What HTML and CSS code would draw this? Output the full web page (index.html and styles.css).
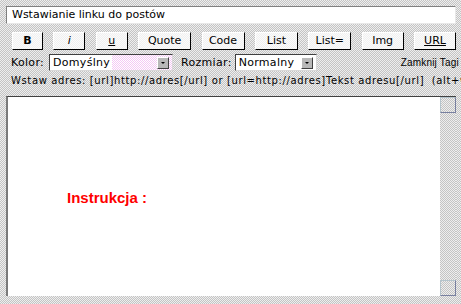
FILE: index.html
```html
<!DOCTYPE html>
<html lang="pl">
<head>
  <meta charset="UTF-8" />
  <title>Wstawianie linku do postów</title>
  <link rel="stylesheet" href="styles.css">
</head>
<body>
  <div class="editor">
    <div class="subject">Wstawianie linku do postów</div>

    <div class="toolbar">
      <div class="btn btn-b">B</div>
      <div class="btn btn-i">i</div>
      <div class="btn btn-u">u</div>
      <div class="btn btn-quote">Quote</div>
      <div class="btn btn-code">Code</div>
      <div class="btn btn-list">List</div>
      <div class="btn btn-list">List=</div>
      <div class="btn btn-img">Img</div>
      <div class="btn btn-url">URL</div>
    </div>

    <div class="options">
      <span class="label">Kolor:</span>
      <div class="select select-color">
        <span class="value">Domyślny</span>
        <span class="arrow"></span>
      </div>
      <span class="label label-size">Rozmiar:</span>
      <div class="select select-size">
        <span class="value">Normalny</span>
        <span class="arrow"></span>
      </div>
      <span class="close-tags">Zamknij Tagi</span>
    </div>

    <div class="help">Wstaw adres: [url]http://adres[/url] or [url=http://adres]Tekst adresu[/url]&nbsp; (alt+w)</div>

    <div class="message">
      <div class="message-text">
        <p class="instruction">Instrukcja :</p>
      </div>
      <div class="scrollbar">
        <div class="scroll-btn"></div>
        <div class="scroll-track"></div>
        <div class="scroll-btn"></div>
      </div>
    </div>
  </div>
</body>
</html>
```

FILE: styles.css
```css
body {
  margin: 0;
  width: 461px;
  height: 304px;
  overflow: hidden;
  background: repeating-conic-gradient(#c4c4c4 0 25%, #eeeeee 0 50%) 0 0 / 2px 2px;
  font-family: "DejaVu Sans", Verdana, sans-serif;
  font-size: 11px;
  color: #000;
}
.editor {
  padding: 6px 5px 0 6px;
}
.subject {
  height: 16px;
  line-height: 16px;
  padding-left: 5px;
  background: #fff;
  border-top: 1px solid #808080;
  border-left: 1px solid #808080;
  border-bottom: 1px solid #e8e8e8;
  border-right: 1px solid #e8e8e8;
  white-space: nowrap;
}
.toolbar {
  display: flex;
  justify-content: space-between;
  margin: 8px 0 0 6px;
}
.btn {
  height: 16px;
  line-height: 16px;
  text-align: center;
  background: repeating-conic-gradient(#f0f0f0 0 25%, #fbfbfb 0 50%) 0 0 / 2px 2px;
  border-top: 1px solid #fff;
  border-left: 1px solid #fff;
  border-right: 1px solid #000;
  border-bottom: 1px solid #000;
}
.btn-b { width: 29px; font-weight: bold; }
.btn-i { width: 30px; font-style: italic; }
.btn-u { width: 30px; text-decoration: underline; }
.btn-quote { width: 51px; }
.btn-code { width: 41px; }
.btn-list { width: 41px; }
.btn-img { width: 40px; }
.btn-url { width: 40px; text-decoration: underline; }
.options {
  display: flex;
  align-items: center;
  height: 19px;
  margin-top: 3px;
  padding-left: 5px;
  white-space: nowrap;
  letter-spacing: 0.3px;
}
.label {
  margin-right: 5px;
}
.label-size {
  margin-left: 8px;
  margin-right: 3px;
}
.select {
  display: flex;
  align-items: center;
  height: 15px;
  border-top: 1px solid #404040;
  border-left: 1px solid #404040;
  border-bottom: 1px solid #d8d8d8;
  border-right: 1px solid #d8d8d8;
  background: #fff;
}
.select .value {
  flex: 1;
  padding-left: 3px;
  line-height: 15px;
}
.select-color {
  width: 122px;
  background: repeating-conic-gradient(#f4c8f4 0 25%, #fff 0 50%) 0 0 / 2px 2px;
}
.select-color .value {
  background: #fff;
  flex: none;
  padding-right: 2px;
  margin-right: auto;
}
.select-size {
  width: 80px;
}
.arrow {
  width: 12px;
  height: 12px;
  margin-right: 3px;
  background: #b8b8b8;
  border-top: 1px solid #fff;
  border-left: 1px solid #fff;
  border-right: 1px solid #404040;
  border-bottom: 1px solid #404040;
  box-sizing: border-box;
  position: relative;
}
.arrow::after {
  content: "";
  position: absolute;
  left: 3px;
  top: 4px;
  border-left: 2px solid transparent;
  border-right: 2px solid transparent;
  border-top: 2px solid #000;
}
.close-tags {
  margin-left: auto;
  margin-right: -3px;
  font-family: "Liberation Sans", Arial, sans-serif;
  font-size: 10px;
  letter-spacing: 0.2px;
}
.help {
  height: 14px;
  line-height: 14px;
  margin-top: 2px;
  margin-right: -5px;
  padding-left: 5px;
  font-size: 10px;
  letter-spacing: 0.62px;
  white-space: nowrap;
  overflow: hidden;
}
.message {
  display: flex;
  box-sizing: border-box;
  height: 200px;
  margin-top: 8px;
  overflow: hidden;
  background: #fff;
  border-top: 1px solid #404040;
  border-left: 2px solid #7a7a7a;
}
.message-text {
  flex: 1;
  padding-left: 59px;
}
.instruction {
  margin: 92px 0 0 0;
  font-family: "Liberation Sans", Arial, sans-serif;
  font-size: 15px;
  font-weight: bold;
  color: #ff0000;
}
.scrollbar {
  display: flex;
  flex-direction: column;
  width: 16px;
  background: repeating-conic-gradient(#c4c4c4 0 25%, #eeeeee 0 50%) 0 0 / 2px 2px;
}
.scroll-btn {
  height: 14px;
  border: 1px solid #b4c4cc;
  border-right-color: #7880a0;
  border-bottom-color: #7880a0;
}
.scroll-track {
  flex: 1;
}
```
